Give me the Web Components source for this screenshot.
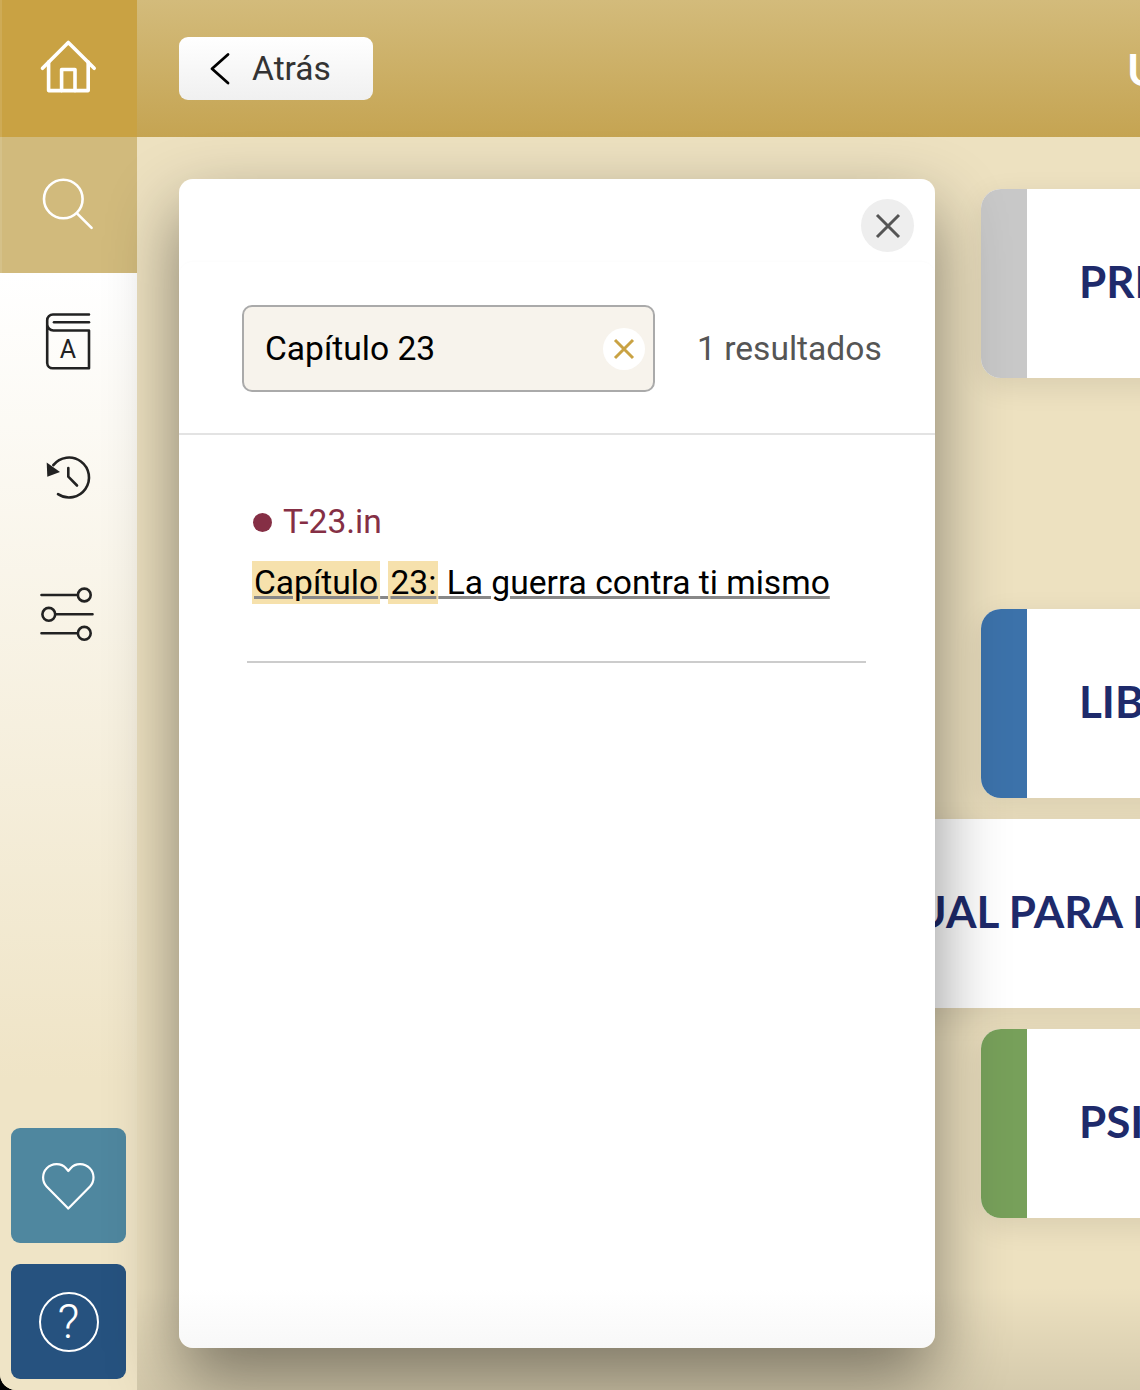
<!DOCTYPE html>
<html lang="es">
<head>
<meta charset="utf-8">
<title>Búsqueda</title>
<style>
  html, body { margin: 0; background: #000; }
  body { width: 1140px; height: 1390px; overflow: hidden; font-family: Roboto, "Liberation Sans", sans-serif; }
</style>
</head>
<body>
<app-shell>
  <side-nav slot="side"></side-nav>
  <top-bar slot="top" heading="UN CURSO DE MILAGROS"></top-bar>
  <book-card slot="main" color="#c8c8c8" label="PREFACIO"></book-card>
  <book-card slot="main" class="gap" color="#3c72aa" label="LIBRO DE TEXTO"></book-card>
  <book-card slot="main" offset="-271" color="#3c72aa" label="MANUAL PARA EL MAESTRO"></book-card>
  <book-card slot="main" color="#77a05a" label="PSICOTERAPIA"></book-card>
  <search-modal slot="over" query="Capítulo 23" count="1 resultados">
    <search-result ref="T-23.in"><mark>Capítulo</mark> <mark>23:</mark> La guerra contra ti mismo</search-result>
  </search-modal>
</app-shell>

<script>
// Marco de la pagina
class AppShell extends HTMLElement {
    constructor() {
        super();
        const shadow = this.attachShadow({ mode: 'open' });
        shadow.innerHTML = `
            <style>
                :host {
                    display: grid;
                    grid-template-columns: 137px 1fr;
                    grid-template-rows: 137px 1fr;
                    position: relative;
                    width: 1140px;
                    height: 1390px;
                    overflow: hidden;
                    border-bottom-left-radius: 16px;
                    background: #ede1c0;
                }
                .side { grid-row: 1 / 3; }
                .main {
                    display: flex;
                    flex-direction: column;
                    gap: 21px;
                    padding: 52px 0 0 844px;
                    overflow: hidden;
                    background: linear-gradient(to bottom, rgba(0,0,0,0) 1150px, rgba(0,0,0,.1) 1253px), #ede1c0;
                }
            </style>
            <div class="side"><slot name="side"></slot></div>
            <slot name="top"></slot>
            <div class="main"><slot name="main"></slot></div>
            <slot name="over"></slot>
        `;
    }
}

class SideNav extends HTMLElement {
    constructor() {
        super();
        const shadow = this.attachShadow({ mode: 'open' });
        shadow.innerHTML = `
            <style>
                :host {
                    display: flex;
                    flex-direction: column;
                    height: 1390px;
                    background: linear-gradient(to bottom, #fff 273px, #efe4c6 1080px);
                }
                .cell { display: block; width: 137px; height: 136.5px; flex: none; }
                .home { background: #c9a243; height: 137px; box-shadow: inset 2px 0 rgba(255,255,255,.1); }
                .search { background: #d1ba7c; height: 136px; box-shadow: inset 2px 0 rgba(255,255,255,.1); }
                svg { display: block; fill: none; stroke-linecap: round; stroke-linejoin: round; }
                .dark { stroke: #222; stroke-width: 2.6; }
                text { font-family: Roboto, sans-serif; font-weight: 400; font-size: 25px; fill: #222; stroke: none; text-anchor: middle; }
                .tools { margin-top: auto; padding: 0 0 11px 11px; display: flex; flex-direction: column; gap: 21px; }
                .tool {
                    width: 115px; height: 115px; border-radius: 9px;
                    display: flex; align-items: center; justify-content: center;
                }
                .fav { background: #4f879f; }
                .help { background: #26527f; }
                .ring {
                    box-sizing: border-box;
                    width: 60px; height: 60px; border-radius: 50%;
                    border: 2.5px solid #fff; color: #fff;
                    display: flex; align-items: center; justify-content: center;
                    font: 300 48px/1 Roboto, sans-serif;
                }
            </style>
            <svg class="cell home" viewBox="0 0 137 137" stroke="#fff" stroke-width="3.6">
                <path d="M42.5 68.3 68.3 42.5 94.2 68.3"/>
                <path d="M48.6 62V90.6H88.2V62"/>
                <path d="M61.6 90.6V69.5H75V90.6"/>
            </svg>
            <svg class="cell search" viewBox="0 0 137 136" stroke="#fff" stroke-width="2.6">
                <circle cx="63.3" cy="62" r="19.3"/>
                <path d="M77.5 76.8 91.6 90.8"/>
            </svg>
            <svg class="cell dark" viewBox="0 0 137 136.5">
                <path d="M89 41.5H53A5.8 5.8 0 0 0 47.2 47.3V90A5.5 5.5 0 0 0 52.7 95.3H89V57.5H53.5A6.2 6.2 0 0 1 47.2 51.5"/>
                <path d="M54 49.3H89"/>
                <text x="68" y="85">A</text>
            </svg>
            <svg class="cell dark" viewBox="0 0 137 136.5">
                <path d="M53.3 55.1A20 20 0 1 1 58 84.2"/>
                <path d="M46.7 52.5 60 62 47.3 66.8Z" fill="#222" stroke="none"/>
                <path d="M68.3 58V66.7L77 75.5"/>
            </svg>
            <svg class="cell dark" viewBox="0 0 137 136.5">
                <path d="M41.5 49H77M41.5 87.3H77M56 68.3H92.5"/>
                <circle cx="84.3" cy="49" r="6.4"/>
                <circle cx="48.8" cy="68.3" r="6.4"/>
                <circle cx="84.3" cy="87.3" r="6.4"/>
            </svg>
            <div class="tools">
                <div class="tool fav">
                    <svg width="115" height="115" viewBox="0 0 115 115" stroke="#fff" stroke-width="2.2">
                        <path d="M57.3 80.6 35.6 58.4C30.8 53 31 45.2 35.8 40.2 41 35 50 34.6 55 40.2L57.3 43 59.7 40.2C64.7 34.6 73.6 35 78.8 40.2 83.6 45.2 83.8 53 79 58.4Z"/>
                    </svg>
                </div>
                <div class="tool help"><span class="ring">?</span></div>
            </div>
        `;
    }
}

class TopBar extends HTMLElement {
    constructor() {
        super();
        const shadow = this.attachShadow({ mode: 'open' });
        shadow.innerHTML = `
            <style>
                :host {
                    display: flex;
                    align-items: center;
                    height: 137px;
                    padding-left: 42px;
                    overflow: hidden;
                    white-space: nowrap;
                    background: linear-gradient(to bottom, #d3bb7b, #c5a452);
                }
                .back {
                    box-sizing: border-box;
                    flex: none;
                    display: flex;
                    align-items: center;
                    gap: 20px;
                    width: 194px;
                    height: 63px;
                    padding-left: 31px;
                    border-radius: 9px;
                    background: linear-gradient(to bottom, #fff, #f0f0f0);
                    color: #333;
                    font: 400 33.6px Roboto, sans-serif;
                }
                svg { display: block; fill: none; stroke: #000; stroke-width: 2.8; stroke-linecap: round; stroke-linejoin: round; }
                h1 {
                    margin: 0 0 0 754px;
                    color: #fff;
                    font: 700 44px Lato, sans-serif;
                }
            </style>
            <div class="back">
                <svg width="22" height="34" viewBox="0 0 22 34"><path d="M18 2.5 2 16.8 18 31"/></svg>
                <span>Atrás</span>
            </div>
            <h1></h1>
        `;
        shadow.querySelector('h1').textContent = this.getAttribute('heading');
    }
}

class BookCard extends HTMLElement {
    constructor() {
        super();
        const shadow = this.attachShadow({ mode: 'open' });
        shadow.innerHTML = `
            <style>
                :host {
                    display: flex;
                    flex: none;
                    width: 1400px;
                    height: 189px;
                    border-radius: 20px;
                    overflow: hidden;
                    background: #fff;
                    box-shadow: 0 8px 30px rgba(0,0,0,.09);
                }
                :host(.gap) { margin-top: 210px; }
                .stripe { width: 46px; flex: none; }
                .label {
                    padding-left: 52px;
                    white-space: nowrap;
                    color: #1e2a6b;
                    font: 700 44px/185px Lato, sans-serif;
                }
            </style>
            <div class="stripe"></div>
            <div class="label"></div>
        `;
        shadow.querySelector('.stripe').style.background = this.getAttribute('color');
        shadow.querySelector('.label').textContent = this.getAttribute('label');
        if (this.hasAttribute('offset')) {
            this.style.marginLeft = this.getAttribute('offset') + 'px';
        }
    }
}

class SearchModal extends HTMLElement {
    constructor() {
        super();
        const shadow = this.attachShadow({ mode: 'open' });
        shadow.innerHTML = `
            <style>
                :host {
                    position: absolute;
                    left: 179px;
                    top: 179px;
                    width: 756px;
                    height: 1169px;
                    display: flex;
                    flex-direction: column;
                    border-radius: 14px;
                    background: linear-gradient(to bottom, #fff 1110px, #f8f8f8);
                    box-shadow: 0 30px 70px rgba(0,0,0,.45);
                }
                .close-row { display: flex; justify-content: flex-end; height: 83px; padding: 20px 21px 0 0; box-sizing: border-box; }
                .close {
                    width: 53px; height: 53px; border-radius: 50%; background: #eee;
                    display: flex; align-items: center; justify-content: center;
                }
                svg { display: block; fill: none; }
                .head {
                    box-sizing: border-box;
                    display: flex;
                    align-items: center;
                    height: 173px;
                    padding: 2px 0 0 63px;
                    border-radius: 14px 14px 0 0;
                    border-bottom: 2px solid #e3e3e3;
                    box-shadow: 0 -1px 2px rgba(0,0,0,.015);
                }
                .field {
                    box-sizing: border-box;
                    display: flex;
                    align-items: center;
                    justify-content: space-between;
                    width: 413px;
                    height: 87px;
                    padding: 0 8px 0 21px;
                    border: 2px solid #aaa;
                    border-radius: 10px;
                    background: #f7f3ec;
                    color: #000;
                    font: 400 33.6px Roboto, sans-serif;
                }
                .clear {
                    width: 42px; height: 42px; border-radius: 50%; background: #fff;
                    display: flex; align-items: center; justify-content: center;
                }
                .count { margin-left: 42px; color: #555; font: 400 33.6px Roboto, sans-serif; white-space: nowrap; }
                .list { padding: 64px 69px 0 68px; }
            </style>
            <div class="close-row">
                <div class="close">
                    <svg width="26" height="26" viewBox="0 0 26 26" stroke="#555" stroke-width="3"><path d="M2 2 24 24M24 2 2 24"/></svg>
                </div>
            </div>
            <div class="head">
                <div class="field">
                    <span class="query"></span>
                    <span class="clear">
                        <svg width="22" height="22" viewBox="0 0 22 22" stroke="#c9a243" stroke-width="3"><path d="M2 2 20 20M20 2 2 20"/></svg>
                    </span>
                </div>
                <span class="count"></span>
            </div>
            <div class="list"><slot></slot></div>
        `;
        shadow.querySelector('.query').textContent = this.getAttribute('query');
        shadow.querySelector('.count').textContent = this.getAttribute('count');
    }
}

class SearchResult extends HTMLElement {
    constructor() {
        super();
        const shadow = this.attachShadow({ mode: 'open' });
        shadow.innerHTML = `
            <style>
                :host {
                    display: block;
                    box-sizing: border-box;
                    height: 164px;
                    border-bottom: 2px solid #ccc;
                }
                .ref {
                    display: flex;
                    align-items: center;
                    gap: 11px;
                    height: 44px;
                    padding-left: 6px;
                    color: #852f45;
                    font: 400 33.6px Roboto, sans-serif;
                }
                .dot { width: 19px; height: 19px; border-radius: 50%; background: #852f45; margin-top: 3px; }
                .title {
                    display: block;
                    margin: 18px 0 0 5px;
                    color: #000;
                    font: 400 33.6px/44px Roboto, sans-serif;
                    white-space: nowrap;
                    text-decoration: underline;
                    text-decoration-color: #888;
                    text-decoration-thickness: 3px;
                }
                ::slotted(mark) { background: #f6e1ac; color: inherit; padding: 2px; }
            </style>
            <div class="ref"><span class="dot"></span><span class="code"></span></div>
            <a class="title"><slot></slot></a>
        `;
        shadow.querySelector('.code').textContent = this.getAttribute('ref');
    }
}

customElements.define('app-shell', AppShell);
customElements.define('side-nav', SideNav);
customElements.define('top-bar', TopBar);
customElements.define('book-card', BookCard);
customElements.define('search-modal', SearchModal);
customElements.define('search-result', SearchResult);
</script>
</body>
</html>
